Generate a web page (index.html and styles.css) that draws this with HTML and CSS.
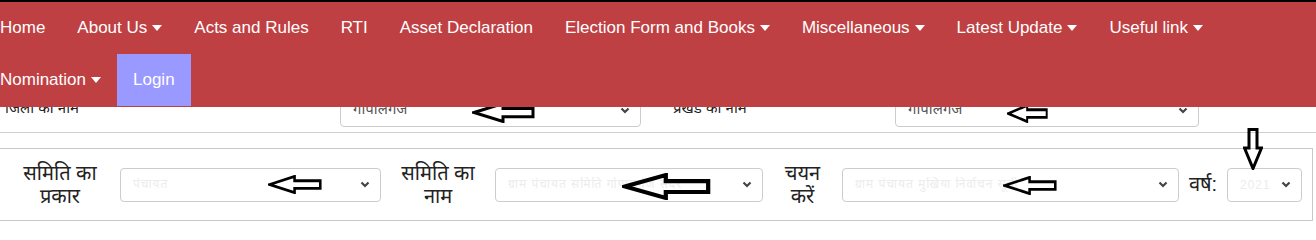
FILE: index.html
```html
<!DOCTYPE html>
<html lang="hi">
<head>
<meta charset="utf-8">
<title>Nomination</title>
<link rel="stylesheet" href="styles.css">
</head>
<body>
<div class="page">
  <nav class="topnav">
    <ul class="menu">
      <li><a href="#">Home</a></li>
      <li><a href="#">About Us<svg class="caret" viewBox="0 0 10 6"><polygon points="0,0 10,0 5,6"/></svg></a></li>
      <li><a href="#">Acts and Rules</a></li>
      <li><a href="#">RTI</a></li>
      <li><a href="#">Asset Declaration</a></li>
      <li><a href="#">Election Form and Books<svg class="caret" viewBox="0 0 10 6"><polygon points="0,0 10,0 5,6"/></svg></a></li>
      <li><a href="#">Miscellaneous<svg class="caret" viewBox="0 0 10 6"><polygon points="0,0 10,0 5,6"/></svg></a></li>
      <li><a href="#">Latest Update<svg class="caret" viewBox="0 0 10 6"><polygon points="0,0 10,0 5,6"/></svg></a></li>
      <li><a href="#">Useful link<svg class="caret" viewBox="0 0 10 6"><polygon points="0,0 10,0 5,6"/></svg></a></li>
      <li><a href="#">Nomination<svg class="caret" viewBox="0 0 10 6"><polygon points="0,0 10,0 5,6"/></svg></a></li>
      <li class="active"><a href="#">Login</a></li>
    </ul>
  </nav>

  <main class="content">
    <div class="row-top">
      <div class="top-label lbl-district">जिला का नाम</div>
      <div class="select sel-district"><span class="val">गोपालगंज</span><svg class="chev" viewBox="0 0 10 7"><polyline points="1.5,1.5 5,5 8.5,1.5"/></svg></div>
      <div class="top-label lbl-block">प्रखंड का नाम</div>
      <div class="select sel-block"><span class="val">गोपालगंज</span><svg class="chev" viewBox="0 0 10 7"><polyline points="1.5,1.5 5,5 8.5,1.5"/></svg></div>
    </div>

    <div class="filter-box">
      <div class="f-label w1">समिति का<br>प्रकार</div>
      <div class="select s1"><span class="val faint">पंचायत</span><svg class="chev" viewBox="0 0 10 7"><polyline points="1.5,1.5 5,5 8.5,1.5"/></svg></div>
      <div class="f-label w2">समिति का<br>नाम</div>
      <div class="select s2"><span class="val faint">ग्राम पंचायत समिति गोपालगंज सदर</span><svg class="chev" viewBox="0 0 10 7"><polyline points="1.5,1.5 5,5 8.5,1.5"/></svg></div>
      <div class="f-label w3">चयन<br>करें</div>
      <div class="select s3"><span class="val faint">ग्राम पंचायत मुखिया निर्वाचन सूची</span><svg class="chev" viewBox="0 0 10 7"><polyline points="1.5,1.5 5,5 8.5,1.5"/></svg></div>
      <div class="f-label w4">वर्ष:</div>
      <div class="select s4"><span class="val faint">2021</span><svg class="chev" viewBox="0 0 10 7"><polyline points="1.5,1.5 5,5 8.5,1.5"/></svg></div>
    </div>
  </main>

  <svg class="mark left-arrow a1" viewBox="0 0 63 20" preserveAspectRatio="none"><polygon points="2,10 31,1.5 31,6 61,6 61,14 31,14 31,18.5"/></svg>
  <svg class="mark left-arrow a2" viewBox="0 0 63 20" preserveAspectRatio="none"><polygon points="2,10 31,1.5 31,6 61,6 61,14 31,14 31,18.5"/></svg>
  <svg class="mark left-arrow a3" viewBox="0 0 63 20" preserveAspectRatio="none"><polygon points="2,10 31,1.5 31,6 61,6 61,14 31,14 31,18.5"/></svg>
  <svg class="mark left-arrow a4" viewBox="0 0 63 20" preserveAspectRatio="none"><polygon points="2,10 31,1.5 31,6 61,6 61,14 31,14 31,18.5"/></svg>
  <svg class="mark left-arrow a5" viewBox="0 0 63 20" preserveAspectRatio="none"><polygon points="2,10 31,1.5 31,6 61,6 61,14 31,14 31,18.5"/></svg>
  <svg class="mark down-arrow a6" viewBox="0 0 20 42" preserveAspectRatio="none"><polygon points="6,1.5 14,1.5 14,20 18.5,20 10,40.5 1.5,20 6,20"/></svg>
</div>
</body>
</html>
```

FILE: styles.css
```css
html, body {
  margin: 0;
  padding: 0;
  background: #fff;
}

body {
  font-family: "Liberation Sans", Arial, "Noto Sans Devanagari", "Lohit Devanagari", "Noto Sans", sans-serif;
  overflow: hidden;
}

.page {
  position: relative;
  width: 1316px;
  height: 233px;
  overflow: hidden;
}

/* ---------- navigation (fixed over the content) ---------- */
.topnav {
  position: absolute;
  top: 0;
  left: 0;
  right: 0;
  z-index: 10;
  background: #bf4043;
  border-top: 2px solid #000;
  padding-bottom: 1px;
}

.menu {
  list-style: none;
  margin: 0 0 0 -16px;
  padding: 0;
  display: flex;
  flex-wrap: wrap;
}

.menu li a {
  display: flex;
  align-items: center;
  padding: 16px;
  height: 20px;
  font-size: 17px;
  line-height: 20px;
  color: #fff;
  text-decoration: none;
  white-space: nowrap;
}

.menu li.active a {
  background: #9999ff;
}

.caret {
  width: 10px;
  height: 6px;
  margin-left: 5px;
  fill: #fff;
}

/* ---------- content ---------- */
.content {
  padding-top: 88px;
}

.row-top {
  display: flex;
  align-items: flex-start;
  height: 44px;
  border-bottom: 1px solid #cfcfcf;
}

.top-label {
  font-size: 15px;
  line-height: 20px;
  color: #222;
  padding-top: 10px;
}

.lbl-district {
  width: 335px;
  padding-left: 5px;
}

.lbl-block {
  width: 222px;
  padding-left: 32px;
}

.row-top .select {
  margin-top: 5px;
  font-size: 15px;
  align-items: flex-end;
  padding-bottom: 6px;
}

.row-top .select .chev {
  margin-bottom: 6px;
}

.sel-district { width: 301px; }
.sel-block { width: 304px; }

.select {
  box-sizing: border-box;
  height: 34px;
  border: 1px solid #cccccc;
  border-radius: 4px;
  background: #fff;
  display: flex;
  align-items: center;
  justify-content: space-between;
  padding: 0 10px 0 12px;
  font-size: 14px;
  color: #555;
  overflow: hidden;
}

.select .val {
  white-space: nowrap;
  overflow: hidden;
}

.select .faint {
  color: #ececec;
  font-size: 12px;
  letter-spacing: 1px;
}

.chev {
  flex: none;
  width: 10px;
  height: 7px;
  fill: none;
  stroke: #444;
  stroke-width: 2.2;
}

.filter-box {
  margin: 15px 0 0 -1px;
  width: 1312px;
  height: 71px;
  border: 1px solid #c8c8c8;
  display: flex;
  align-items: center;
}

.f-label {
  box-sizing: border-box;
  font-size: 20px;
  line-height: 23px;
  color: #222;
  text-align: center;
}

.w1 { width: 120px; }
.w2 { width: 114px; }
.w3 { width: 79px; }
.w4 { width: 48px; }

.s1 { width: 261px; }
.s2 { width: 268px; }
.s3 { width: 337px; }
.s4 { width: 75px; }

/* ---------- annotation arrows drawn over the form ---------- */
.mark {
  position: absolute;
  z-index: 5;
  fill: none;
  stroke: #000;
  stroke-width: 3;
  stroke-linejoin: miter;
}

.a1 { left: 472px; top: 102px; width: 63px; height: 21px; }
.a2 { left: 1007px; top: 104px; width: 41px; height: 19px; }
.a3 { left: 268px; top: 175px; width: 54px; height: 19px; }
.a4 { left: 622px; top: 173px; width: 89px; height: 27px; }
.a5 { left: 1003px; top: 176px; width: 54px; height: 19px; }
.a6 { left: 1243px; top: 128px; width: 20px; height: 42px; }
```
